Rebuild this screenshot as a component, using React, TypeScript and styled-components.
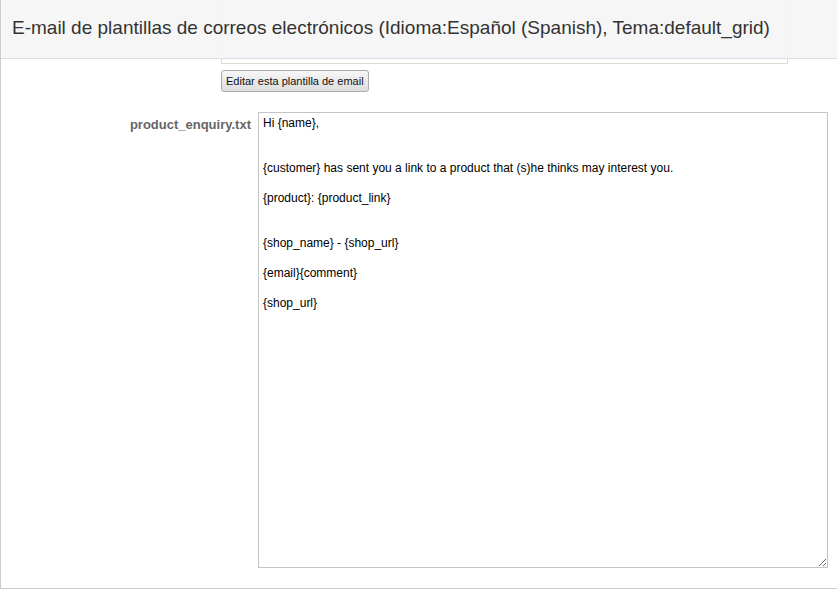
import { FunctionComponent } from "react";
import styled, { createGlobalStyle } from "styled-components";

const GlobalStyle = createGlobalStyle`
  html, body {
    margin: 0;
    padding: 0;
    background: #fff;
    overflow: hidden;
  }
  body {
    font-family: "Liberation Sans", Arial, sans-serif;
    color: #333;
  }
`;

const Viewport = styled.div`
  position: relative;
  width: 837px;
  height: 595px;
  overflow: hidden;
`;

const Panel = styled.div`
  position: relative;
  width: 860px;
  height: 589px;
  box-sizing: border-box;
  border-left: 1px solid #ccc;
  border-bottom: 1px solid #ccc;
  overflow: hidden;
`;

// sticky toolbar title lying over the scrolled form
const PanelHeading = styled.h3`
  position: absolute;
  top: 0;
  left: 0;
  right: 0;
  z-index: 2;
  margin: 0;
  height: 59px;
  box-sizing: border-box;
  padding: 0 0 3px 11px;
  display: flex;
  align-items: center;
  background: rgba(245, 245, 245, 0.94);
  border-bottom: 1px solid #ddd;
  font-size: 19px;
  font-weight: normal;
  color: #333;
  font-family: "Liberation Sans", Arial, sans-serif;
`;

const Body = styled.div`
  display: flex;
  flex-direction: column;
  margin-top: -30px;
`;

const PrevGroup = styled.div`
  display: flex;
  flex-direction: column;
  align-items: flex-start;
  gap: 6px;
  padding-left: 220px;
`;

const PrevArea = styled.div`
  width: 567px;
  height: 94px;
  box-sizing: border-box;
  border: 1px solid #dcdcd0;
  background: #fff;
`;

const EditButton = styled.button`
  height: 22px;
  padding: 0 4px;
  box-sizing: border-box;
  border: 1px solid #a9a9a9;
  border-radius: 3px;
  background: linear-gradient(#f7f7f7, #dddddd);
  font-family: "Liberation Sans", Arial, sans-serif;
  font-size: 11px;
  color: #111;
  cursor: pointer;
`;

const FormRow = styled.div`
  display: grid;
  grid-template-columns: 250px 570px;
  column-gap: 7px;
  margin-top: 20px;
`;

const Label = styled.label`
  text-align: right;
  font-weight: bold;
  font-size: 13px;
  color: #666;
  padding-top: 5px;
  font-family: "Liberation Sans", Arial, sans-serif;
`;

const TemplateArea = styled.textarea`
  width: 570px;
  height: 456px;
  box-sizing: border-box;
  margin: 0;
  padding: 3px 4px;
  border: 1px solid #c4c4c4;
  font-family: "Liberation Sans", Arial, sans-serif;
  font-size: 12px;
  line-height: 15px;
  color: #000;
  background: #fff;
  resize: both;
  outline: none;
  overflow: hidden;
`;

const templateText = `Hi {name},


{customer} has sent you a link to a product that (s)he thinks may interest you.

{product}: {product_link}


{shop_name} - {shop_url}

{email}{comment}

{shop_url}`;

const App: FunctionComponent = () => {
  return (
    <Viewport>
      <GlobalStyle />
      <Panel>
        <PanelHeading>
          E-mail de plantillas de correos electrónicos (Idioma:Español (Spanish), Tema:default_grid)
        </PanelHeading>
        <Body>
          <PrevGroup>
            <PrevArea />
            <EditButton type="button">Editar esta plantilla de email</EditButton>
          </PrevGroup>
          <FormRow>
            <Label>product_enquiry.txt</Label>
            <TemplateArea readOnly defaultValue={templateText} />
          </FormRow>
        </Body>
      </Panel>
    </Viewport>
  );
};

export default App;
